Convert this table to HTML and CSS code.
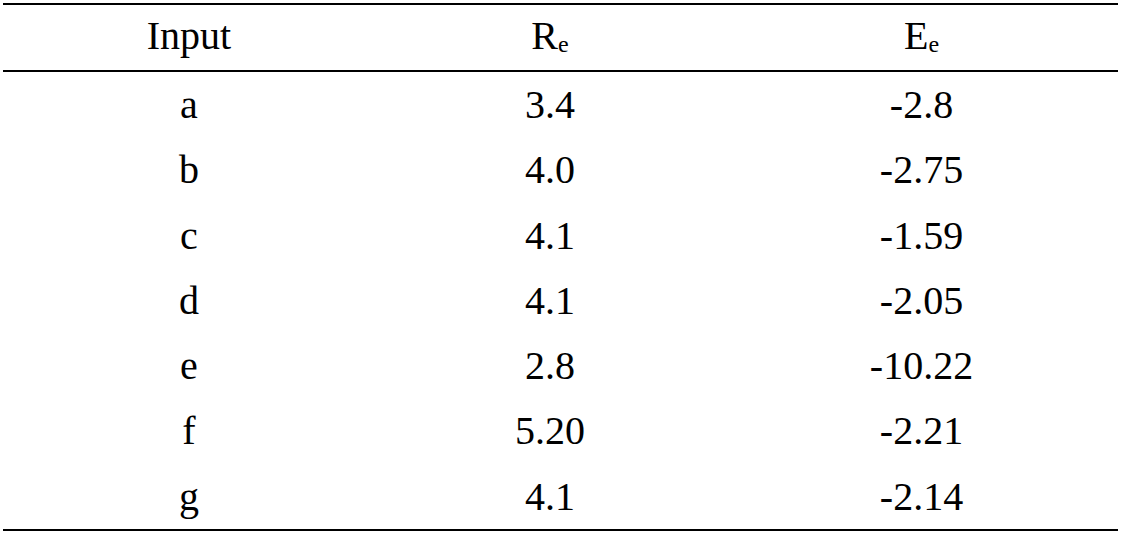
FILE: index.html
```html
<!DOCTYPE html>
<html lang="en">
<head>
    <meta charset="UTF-8">
    <title>Table</title>
    <link rel="stylesheet" href="styles.css">
</head>
<body>
    <table class="data-table">
        <thead>
            <tr>
                <th class="col-input">Input</th>
                <th class="col-r">R<sub>e</sub></th>
                <th class="col-e">E<sub>e</sub></th>
            </tr>
        </thead>
        <tbody>
            <tr><td>a</td><td>3.4</td><td>-2.8</td></tr>
            <tr><td>b</td><td>4.0</td><td>-2.75</td></tr>
            <tr><td>c</td><td>4.1</td><td>-1.59</td></tr>
            <tr><td>d</td><td>4.1</td><td>-2.05</td></tr>
            <tr><td>e</td><td>2.8</td><td>-10.22</td></tr>
            <tr><td>f</td><td>5.20</td><td>-2.21</td></tr>
            <tr><td>g</td><td>4.1</td><td>-2.14</td></tr>
        </tbody>
    </table>
</body>
</html>
```
FILE: styles.css
```css
* {
    margin: 0;
    padding: 0;
    box-sizing: border-box;
}

body {
    background-color: #ffffff;
    color: #000000;
    padding: 3px 4px 0 3px;
}

.data-table {
    width: 1115px;
    border-collapse: collapse;
    table-layout: fixed;
    border-top: 2px solid #000;
    border-bottom: 2px solid #000;
}

.data-table th,
.data-table td {
    font-family: "Liberation Serif", "DejaVu Serif", serif;
    font-size: 40px;
    text-align: center;
    font-weight: normal;
    white-space: nowrap;
}

.data-table thead th {
    line-height: 61px;
    padding-bottom: 4px;
    border-bottom: 2px solid #000;
}

.data-table tbody td {
    height: 65.3px;
    line-height: 65.3px;
}

.col-input {
    width: 372px;
}

.col-r {
    width: 350px;
}

.col-e {
    width: 393px;
}

.data-table sub {
    font-size: 0.6em;
    line-height: 0;
    vertical-align: -0.12em;
}
```
